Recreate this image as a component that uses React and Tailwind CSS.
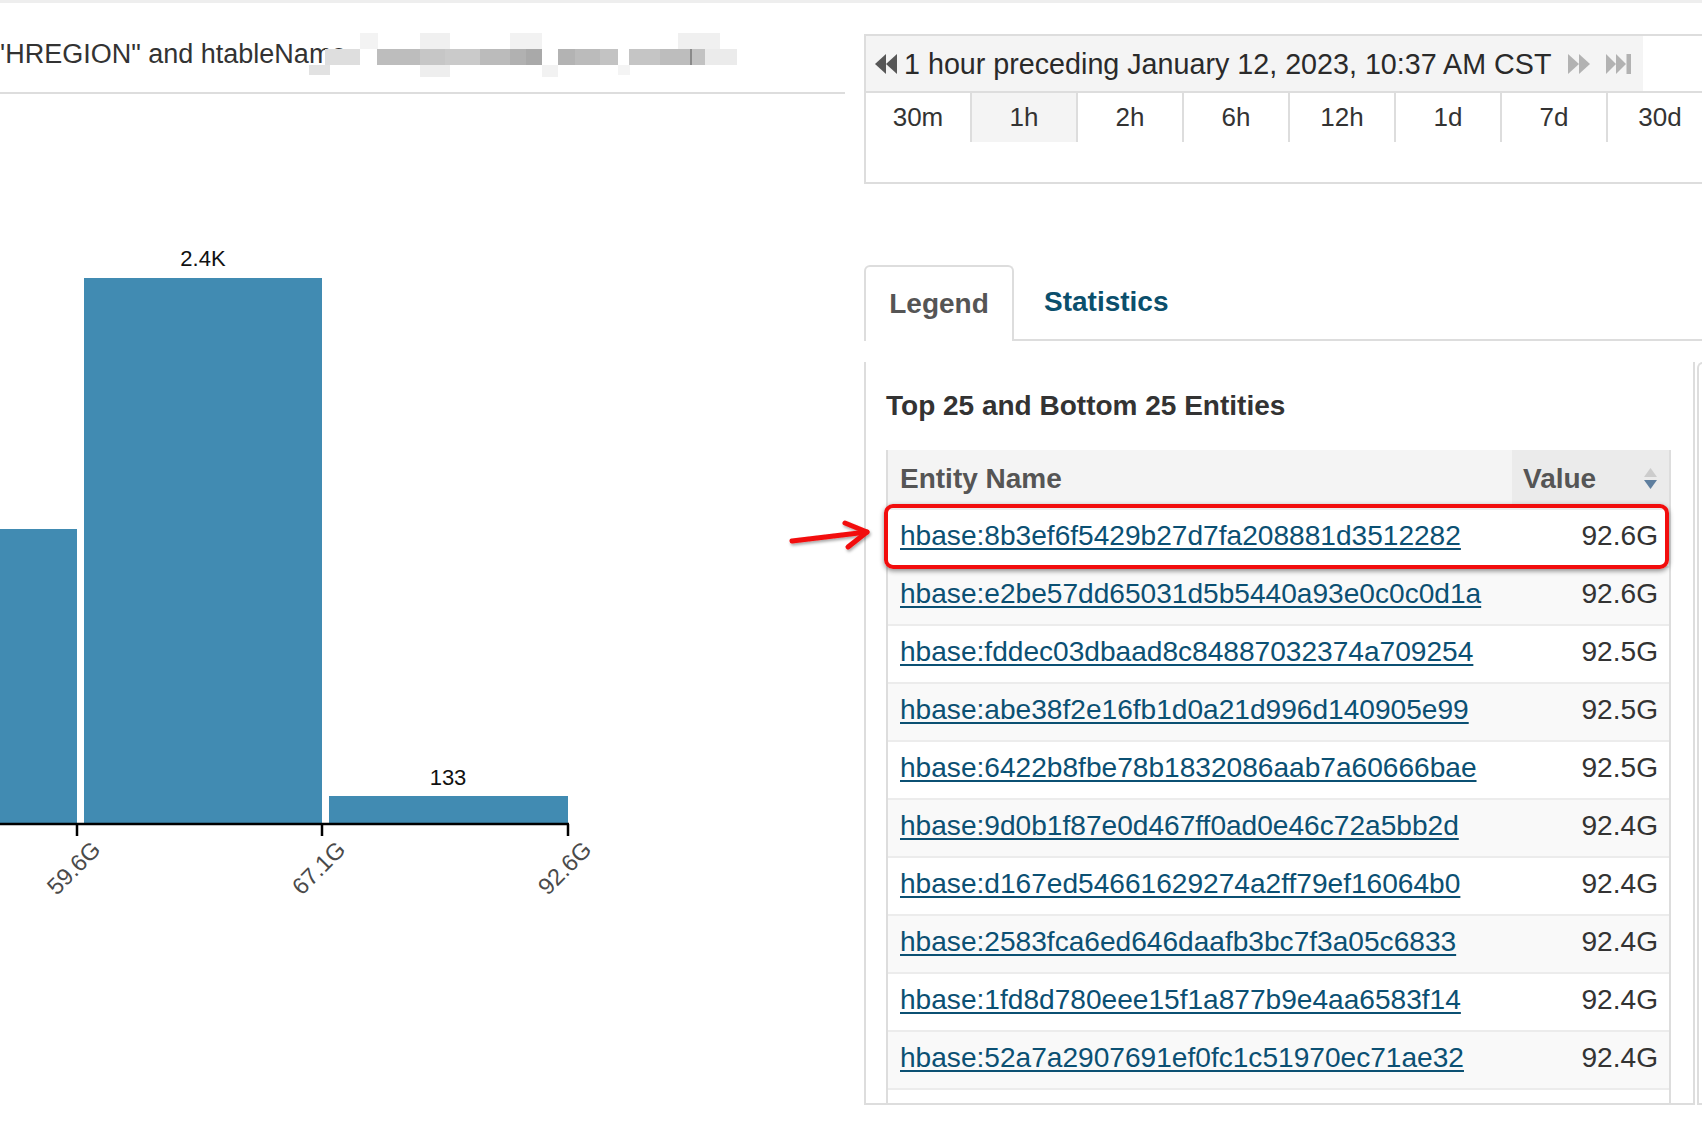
import React from 'react';

const RANGES = ['30m', '1h', '2h', '6h', '12h', '1d', '7d', '30d'];

const ROWS = [
  ['hbase:8b3ef6f5429b27d7fa208881d3512282', '92.6G'],
  ['hbase:e2be57dd65031d5b5440a93e0c0c0d1a', '92.6G'],
  ['hbase:fddec03dbaad8c84887032374a709254', '92.5G'],
  ['hbase:abe38f2e16fb1d0a21d996d140905e99', '92.5G'],
  ['hbase:6422b8fbe78b1832086aab7a60666bae', '92.5G'],
  ['hbase:9d0b1f87e0d467ff0ad0e46c72a5bb2d', '92.4G'],
  ['hbase:d167ed54661629274a2ff79ef16064b0', '92.4G'],
  ['hbase:2583fca6ed646daafb3bc7f3a05c6833', '92.4G'],
  ['hbase:1fd8d780eee15f1a877b9e4aa6583f14', '92.4G'],
  ['hbase:52a7a2907691ef0fc1c51970ec71ae32', '92.4G'],
  ['', ''],
];

// redaction blocks: [left, top, width, height, colour], relative to the blur box
const BLUR = [
  [16, 16, 35, 16, '#dedede'],
  [0, 32, 21, 10, '#e2e2e2'],
  [51, 0, 18, 16, '#f3f3f3'],
  [68, 16, 43, 16, '#bdbdbd'],
  [111, 16, 25, 16, '#c6c6c6'],
  [111, 0, 30, 16, '#f0f0f0'],
  [111, 32, 30, 12, '#eeeeee'],
  [136, 16, 35, 16, '#cacaca'],
  [171, 16, 30, 16, '#bbbbbb'],
  [201, 16, 16, 16, '#b1b1b1'],
  [201, 0, 32, 16, '#f2f2f2'],
  [217, 16, 16, 16, '#a9a9a9'],
  [233, 32, 16, 12, '#f2f2f2'],
  [249, 16, 17, 16, '#b3b3b3'],
  [266, 16, 25, 16, '#bbbbbb'],
  [291, 16, 18, 16, '#c3c3c3'],
  [309, 32, 12, 10, '#f4f4f4'],
  [320, 16, 31, 16, '#c5c5c5'],
  [351, 16, 30, 16, '#bdbdbd'],
  [369, 0, 42, 16, '#f0f0f0'],
  [381, 16, 15, 16, '#c2c2c2'],
  [381, 16, 2, 16, '#8a8a8a'],
  [396, 16, 32, 16, '#ebebeb'],
];

function BackIcon() {
  return (
    <svg width="22" height="20" viewBox="0 0 22 20">
      <polygon points="11,0 0,10 11,20" fill="#575757" />
      <polygon points="22,0 11,10 22,20" fill="#575757" />
    </svg>
  );
}

function ForwardIcon() {
  return (
    <svg width="22" height="20" viewBox="0 0 22 20">
      <polygon points="0,0 11,10 0,20" fill="#b2b2b2" />
      <polygon points="11,0 22,10 11,20" fill="#b2b2b2" />
    </svg>
  );
}

function EndIcon() {
  return (
    <svg width="25" height="20" viewBox="0 0 25 20">
      <polygon points="0,0 10,10 0,20" fill="#b2b2b2" />
      <polygon points="10,0 20,10 10,20" fill="#b2b2b2" />
      <rect x="20.5" y="0" width="4.5" height="20" fill="#b2b2b2" />
    </svg>
  );
}

function SortIcon() {
  return (
    <svg width="13" height="22" viewBox="0 0 13 22">
      <polygon points="6.5,0 0,9 13,9" fill="#cccccc" />
      <polygon points="0,12 13,12 6.5,21" fill="#5f7f9f" />
    </svg>
  );
}

function Histogram() {
  const ticks = [
    [77, '59.6G'],
    [322, '67.1G'],
    [568, '92.6G'],
  ];
  return (
    <svg width="640" height="900" viewBox="0 0 640 900" className="block">
      <rect x="0" y="435" width="77" height="295" fill="#418bb2" />
      <rect x="84" y="184" width="238" height="546" fill="#418bb2" />
      <rect x="329" y="702" width="239" height="28" fill="#418bb2" />
      <text x="203" y="172" textAnchor="middle" fontSize="22" fill="#111">2.4K</text>
      <text x="448" y="691" textAnchor="middle" fontSize="22" fill="#111">133</text>
      <line x1="0" y1="730" x2="569" y2="730" stroke="#000" strokeWidth="2.5" />
      {ticks.map(([x, label]) => (
        <g key={label}>
          <line x1={x} y1="730" x2={x} y2="742" stroke="#000" strokeWidth="2.5" />
          <text
            x={x + 25}
            y="757"
            textAnchor="end"
            fontSize="23.5"
            fill="#4a4a4a"
            transform={`rotate(-45 ${x + 25} 757)`}
          >
            {label}
          </text>
        </g>
      ))}
    </svg>
  );
}

function Arrow() {
  return (
    <svg width="90" height="44" viewBox="0 0 90 44" className="absolute left-[785px] top-[514px]">
      <defs>
        <filter id="sh" x="-20%" y="-40%" width="140%" height="180%">
          <feDropShadow dx="1" dy="2" stdDeviation="1.5" floodColor="#000" floodOpacity="0.35" />
        </filter>
      </defs>
      <g filter="url(#sh)" stroke="#f20d0d" strokeWidth="5" strokeLinecap="round" strokeLinejoin="round" fill="none">
        <path d="M7 27 L82 18" />
        <path d="M60 9 L82 18 L63 33" />
      </g>
    </svg>
  );
}

export default function App() {
  return (
    <div className="relative w-[1702px] h-[1126px] overflow-hidden bg-white text-[#333] font-['Liberation_Sans',Arial,sans-serif]">
      <div className="h-[3px] bg-[#eeeeee]" />
      <div className="flex">
        {/* left: query + histogram */}
        <div className="w-[864px] shrink-0">
          <div className="relative w-[845px] h-[91px] border-b-2 border-[#dddddd] pt-[37px]">
            <div className="text-[27px] leading-[28px] whitespace-nowrap">'HREGION" and htableName</div>
            <div className="absolute left-[309px] top-[30px] w-[430px] h-[46px]">
              {BLUR.map(([l, t, w, h, c], i) => (
                <div
                  key={i}
                  className="absolute"
                  style={{ left: l, top: t, width: w, height: h, background: c }}
                />
              ))}
            </div>
          </div>
          <Histogram />
        </div>

        {/* right: time range, tabs, legend */}
        <div className="w-[838px] shrink-0 pt-[31px]">
          <div className="w-[900px] h-[150px] border-2 border-[#dddddd]">
            <div className="flex h-[57px] border-b-2 border-[#dddddd]">
              <div className="w-[777px] bg-[#f4f4f4] flex items-center pl-[9px]">
                <BackIcon />
                <span className="ml-[7px] text-[28.7px] leading-[32px] whitespace-nowrap text-[#2a2a2a]">
                  1 hour preceding January 12, 2023, 10:37 AM CST
                </span>
                <span className="ml-[17px] flex items-center">
                  <ForwardIcon />
                </span>
                <span className="ml-[16px] flex items-center">
                  <EndIcon />
                </span>
              </div>
            </div>
            <div className="flex h-[49px]">
              {RANGES.map((r) => (
                <div
                  key={r}
                  className={`w-[106px] shrink-0 border-r-2 border-[#dddddd] flex items-center justify-center text-[26px] ${
                    r === '1h' ? 'bg-[#f4f4f4]' : ''
                  }`}
                >
                  {r}
                </div>
              ))}
            </div>
          </div>

          <div className="flex h-[76px] mt-[81px]">
            <div className="w-[150px] h-[76px] shrink-0 border-2 border-b-0 border-[#dddddd] rounded-t-[6px] bg-white flex items-center justify-center text-[28px] font-bold text-[#555]">
              Legend
            </div>
            <div className="flex-1 border-b-2 border-[#dddddd] flex items-center pl-[30px] text-[28px] font-bold text-[#0b4f6c]">
              Statistics
            </div>
          </div>

          <div className="flex mt-[21px]">
            <div className="w-[831px] h-[743px] shrink-0 border-l-2 border-r-2 border-b-2 border-[#dddddd] overflow-hidden pl-[20px]">
              <div className="pt-[28px] text-[28px] leading-[32px] font-bold text-[#333]">
                Top 25 and Bottom 25 Entities
              </div>
              <div className="relative mt-[28px] w-[785px] border-x-2 border-[#dddddd]">
                <div className="flex h-[58px] bg-[#f4f4f4] text-[28px] font-bold text-[#555]">
                  <div className="flex-1 flex items-center pl-[12px]">Entity Name</div>
                  <div className="w-[157px] bg-[#ebebeb] flex items-center justify-between pl-[11px] pr-[12px]">
                    <span>Value</span>
                    <SortIcon />
                  </div>
                </div>
                {ROWS.map(([name, value], i) => (
                  <div
                    key={i}
                    className={`flex h-[58px] items-center justify-between border-t-2 border-[#ececec] pl-[12px] pr-[11px] pb-[3px] text-[28.1px] ${
                      i % 2 === 1 ? 'bg-[#f9f9f9]' : 'bg-white'
                    }`}
                  >
                    <a href="#" className="text-[#0b5073] underline underline-offset-[3px]">
                      {name}
                    </a>
                    <span className="text-[#333]">{value}</span>
                  </div>
                ))}
                <div className="absolute left-[-4px] top-[54px] w-[785px] h-[65px] border-[4px] border-[#f20d0d] rounded-[9px] shadow-[0_2px_5px_rgba(0,0,0,0.45)]" />
              </div>
            </div>
            <div className="ml-[2px] w-[20px] h-[743px] shrink-0 border-l-2 border-t-2 border-b-2 border-[#dddddd] rounded-tl-[6px]" />
          </div>
        </div>
      </div>
      <Arrow />
    </div>
  );
}
